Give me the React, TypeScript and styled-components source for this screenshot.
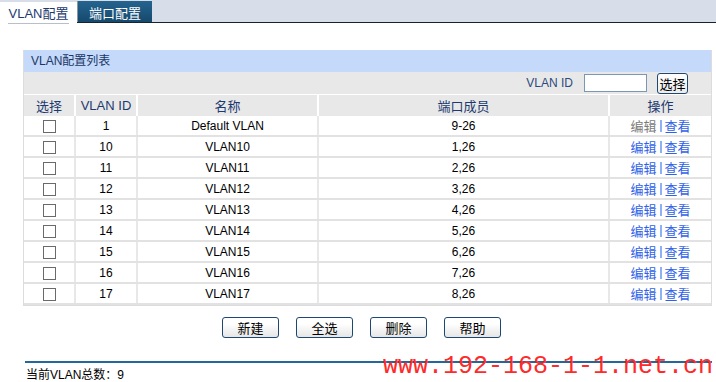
import React from 'react';
import styled, { createGlobalStyle } from 'styled-components';

const GlobalStyle = createGlobalStyle`
    body {
        margin: 0;
        background: #fff;
        font-family: "Liberation Sans", "Noto Sans CJK SC", sans-serif;
        font-size: 12px;
        color: #000;
    }
`;

const Page = styled.div`
    position: relative;
    width: 716px;
    height: 382px;
    overflow: hidden;
`;

const TabBar = styled.div`
    display: flex;
    align-items: flex-end;
    height: 22px;
    background: #d8dee9;
    border-bottom: 1px solid #13262f;
`;

const Tab = styled.div<{ $active?: boolean }>`
    display: flex;
    align-items: center;
    justify-content: center;
    box-sizing: border-box;
    height: 21px;
    width: ${p => (p.$active ? '77px' : '75px')};
    margin-bottom: ${p => (p.$active ? '-1px' : '0')};
    background: ${p => (p.$active ? '#fff' : 'linear-gradient(#24648f, #16496d)')};
    color: ${p => (p.$active ? '#1d3a70' : '#fff')};
    font-size: 13px;
    padding-top: 2px;
    border-left: ${p => (p.$active ? 'none' : '1px solid #8a96a2')};
`;

const TabLabel = styled.span`
    padding: 0 1px 1px;
    border-bottom: 1px solid #b8bfc8;
`;

const Panel = styled.div`
    margin: 27px 4px 0 23px;
    border: 1px solid #dcdcdc;
    border-top: none;
`;

const PanelTitle = styled.div`
    height: 22px;
    line-height: 22px;
    padding-left: 7px;
    background: #c5d9fa;
    color: #1b3766;
`;

const FilterRow = styled.div`
    display: flex;
    align-items: center;
    justify-content: flex-end;
    height: 22px;
    background: #e8e8e8;
    border-bottom: 1px solid #fff;
    padding-right: 23px;
    color: #2a4a80;
`;

const FilterInput = styled.input`
    box-sizing: border-box;
    width: 63px;
    height: 18px;
    margin: 0 10px 0 11px;
    border: 1px solid #7a98b6;
    padding: 0;
`;

const SmallButton = styled.button`
    box-sizing: border-box;
    width: 31px;
    height: 21px;
    padding: 0;
    border: 1px solid #1c4873;
    border-radius: 3px;
    background: linear-gradient(#fff, #ececec);
    font-family: inherit;
    font-size: 13px;
    color: #000;
`;

const Grid = styled.table`
    width: 100%;
    border-collapse: collapse;
    table-layout: fixed;
`;

const HeadCell = styled.th`
    height: 21px;
    padding: 0;
    background: #e8e8e8;
    color: #1d3a70;
    font-weight: normal;
    font-size: 13px;
    border-right: 2px solid #fff;
    &:last-child { border-right: none; }
`;

const Cell = styled.td`
    height: 19px;
    padding: 0;
    text-align: center;
    border-right: 2px solid #e8e8e8;
    border-bottom: 2px solid #e2e2e2;
    &:last-child { border-right: none; }
`;

const Box = styled.span`
    display: inline-block;
    width: 11px;
    height: 11px;
    border: 1px solid #6a6a6a;
    background: #fff;
    vertical-align: middle;
`;

const ActionLink = styled.span<{ $muted?: boolean }>`
    color: ${p => (p.$muted ? '#7b7b7b' : '#2f62e8')};
    font-size: 13px;
`;

const Sep = styled.span`
    display: inline-block;
    width: 2px;
    height: 12px;
    margin: 0 3px;
    background: #8cb2f5;
    vertical-align: -1px;
`;

const ButtonRow = styled.div`
    display: flex;
    gap: 17px;
    margin: 11px 0 0 222px;
`;

const ActionButton = styled.button`
    box-sizing: border-box;
    width: 57px;
    height: 21px;
    padding: 0;
    border: 1px solid #1c4873;
    border-radius: 3px;
    background: linear-gradient(#fff 30%, #e6e6e6);
    font-family: inherit;
    font-size: 13px;
    color: #000;
`;

const Footer = styled.div`
    margin: 23px 4px 0 25px;
    border-top: 2px solid #24679a;
    padding: 2px 0 0 1px;
    font-size: 12px;
`;

const Watermark = styled.div`
    position: absolute;
    left: 383px;
    top: 352px;
    font-family: "Liberation Mono", monospace;
    font-size: 25px;
    color: #ff2a2a;
    white-space: nowrap;
`;

interface Vlan {
    id: number;
    name: string;
    ports: string;
}

const vlans: Vlan[] = [
    { id: 1, name: 'Default VLAN', ports: '9-26' },
    { id: 10, name: 'VLAN10', ports: '1,26' },
    { id: 11, name: 'VLAN11', ports: '2,26' },
    { id: 12, name: 'VLAN12', ports: '3,26' },
    { id: 13, name: 'VLAN13', ports: '4,26' },
    { id: 14, name: 'VLAN14', ports: '5,26' },
    { id: 15, name: 'VLAN15', ports: '6,26' },
    { id: 16, name: 'VLAN16', ports: '7,26' },
    { id: 17, name: 'VLAN17', ports: '8,26' },
];

const App: React.FC = () => {
    return (
        <>
            <GlobalStyle />
            <Page>
                <TabBar>
                    <Tab $active><TabLabel>VLAN配置</TabLabel></Tab>
                    <Tab>端口配置</Tab>
                </TabBar>

                <Panel>
                    <PanelTitle>VLAN配置列表</PanelTitle>
                    <FilterRow>
                        VLAN ID
                        <FilterInput />
                        <SmallButton>选择</SmallButton>
                    </FilterRow>
                    <Grid>
                        <colgroup>
                            <col style={{ width: 51 }} />
                            <col style={{ width: 62 }} />
                            <col style={{ width: 181 }} />
                            <col style={{ width: 291 }} />
                            <col />
                        </colgroup>
                        <thead>
                            <tr>
                                <HeadCell>选择</HeadCell>
                                <HeadCell>VLAN ID</HeadCell>
                                <HeadCell>名称</HeadCell>
                                <HeadCell>端口成员</HeadCell>
                                <HeadCell>操作</HeadCell>
                            </tr>
                        </thead>
                        <tbody>
                            {vlans.map((v, i) => (
                                <tr key={v.id}>
                                    <Cell><Box /></Cell>
                                    <Cell>{v.id}</Cell>
                                    <Cell>{v.name}</Cell>
                                    <Cell>{v.ports}</Cell>
                                    <Cell>
                                        <ActionLink $muted={i === 0}>编辑</ActionLink>
                                        <Sep />
                                        <ActionLink>查看</ActionLink>
                                    </Cell>
                                </tr>
                            ))}
                        </tbody>
                    </Grid>
                </Panel>

                <ButtonRow>
                    <ActionButton>新建</ActionButton>
                    <ActionButton>全选</ActionButton>
                    <ActionButton>删除</ActionButton>
                    <ActionButton>帮助</ActionButton>
                </ButtonRow>

                <Footer>当前VLAN总数：9</Footer>

                <Watermark>www.192-168-1-1.net.cn</Watermark>
            </Page>
        </>
    );
}

export default App;
